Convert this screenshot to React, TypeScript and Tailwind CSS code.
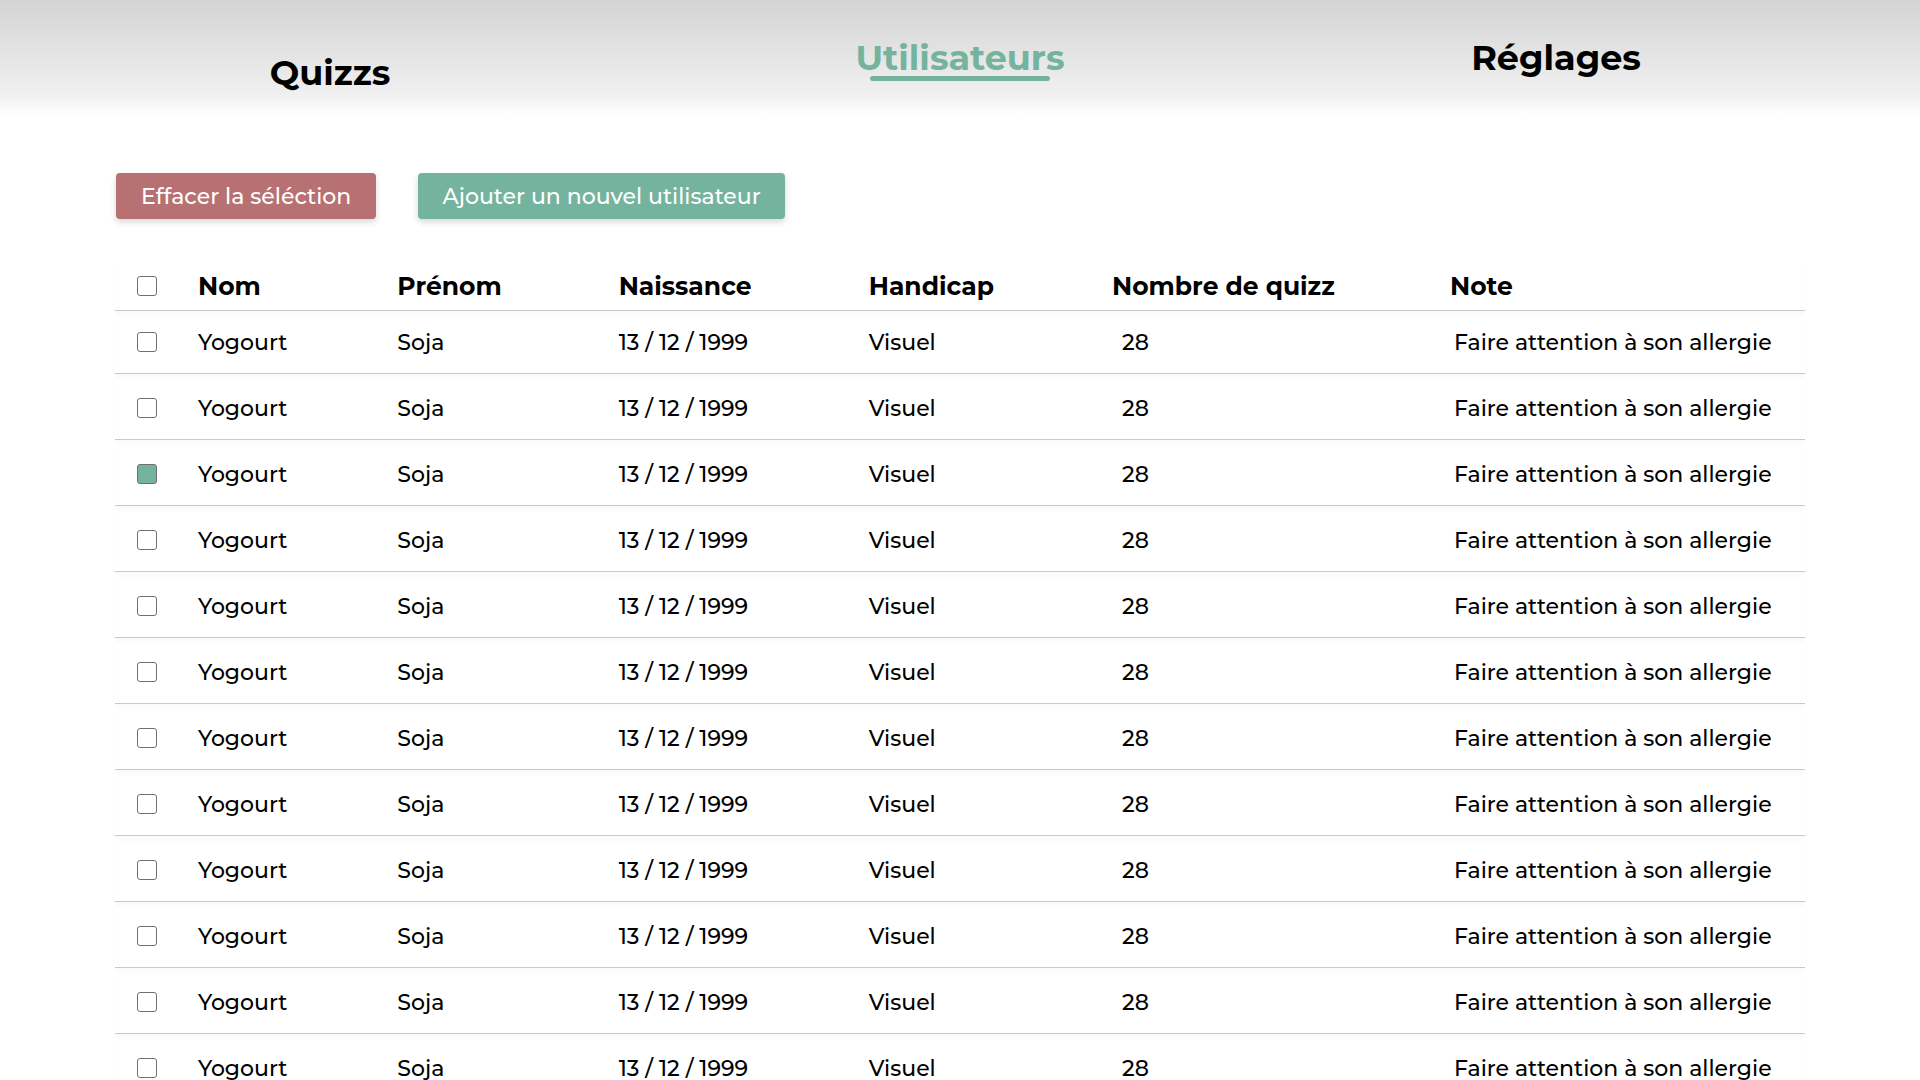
import { useState } from "react";

const COLUMNS = ["Nom", "Prénom", "Naissance", "Handicap", "Nombre de quizz", "Note"];

const USERS = Array.from({ length: 12 }, (_, id) => ({
  id,
  nom: "Yogourt",
  prenom: "Soja",
  naissance: "13 / 12 / 1999",
  handicap: "Visuel",
  quizz: 28,
  note: "Faire attention à son allergie",
}));

function Checkbox({ label, checked, onChange }: { label: string; checked: boolean; onChange: () => void }) {
  return (
    <input
      type="checkbox"
      aria-label={label}
      checked={checked}
      onChange={onChange}
      className="ml-[22px] block size-5 appearance-none rounded-[3px] border border-[#707070] bg-white checked:bg-[#74b49e]"
    />
  );
}

function Header() {
  return (
    <header className="h-[115px] bg-linear-to-b from-[#d4d4d4] via-[#f1f1f1] via-85% to-white pr-[68px]">
      <nav className="grid grid-cols-[660fr_600fr_592fr] justify-items-center pt-9 text-[35px] leading-11 font-bold">
        <a href="#quizzs" className="pt-[15px]">Quizzs</a>
        <a href="#utilisateurs" aria-current="page" className="flex flex-col items-center text-[#74b49e]">
          Utilisateurs
          <span className="-mt-1 h-[5px] w-[180px] rounded-full bg-[#74b49e]" />
        </a>
        <a href="#reglages">Réglages</a>
      </nav>
    </header>
  );
}

export default function App() {
  const [selected, setSelected] = useState<number[]>([2]);
  const toggle = (id: number) =>
    setSelected((s) => (s.includes(id) ? s.filter((x) => x !== id) : [...s, id]));
  const all = selected.length === USERS.length;

  return (
    <div className="bg-white font-['Montserrat','Inter',sans-serif] text-black">
      <Header />
      <main className="px-[6%] pt-[58px]">
        <div className="flex gap-[42px] pl-px text-[22px] font-medium text-white">
          <button type="button" className="h-[46px] w-[260px] rounded bg-[#b77172] whitespace-nowrap shadow-[0_3px_6px_rgba(0,0,0,0.16)]">
            Effacer la séléction
          </button>
          <button type="button" className="h-[46px] w-[367px] rounded bg-[#74b49e] whitespace-nowrap shadow-[0_3px_6px_rgba(0,0,0,0.16)]">
            Ajouter un nouvel utilisateur
          </button>
        </div>
        <table className="mt-[43px] w-full table-fixed border-separate border-spacing-0 text-left">
          <colgroup>
            <col className="w-[4.9%]" />
            <col className="w-[11.8%]" />
            <col className="w-[13.1%]" />
            <col className="w-[14.8%]" />
            <col className="w-[14.4%]" />
            <col className="w-[20%]" />
            <col className="w-[21%]" />
          </colgroup>
          <thead>
            <tr className="h-[49px] shadow-[0_5px_5px_rgba(0,0,0,0.02)]">
              <th className="border-b border-[#c8c8c8] p-0">
                <Checkbox
                  label="Tout sélectionner"
                  checked={all}
                  onChange={() => setSelected(all ? [] : USERS.map((u) => u.id))}
                />
              </th>
              {COLUMNS.map((c) => (
                <th key={c} scope="col" className="border-b border-[#c8c8c8] p-0 text-[25px] leading-8 font-bold whitespace-nowrap">
                  {c}
                </th>
              ))}
            </tr>
          </thead>
          <tbody className="text-[22px] leading-[30px] font-medium whitespace-nowrap [&_td]:border-b [&_td]:border-[#c8c8c8] [&_td]:px-0 [&_td]:pb-0">
            {USERS.map((u) => (
              <tr
                key={u.id}
                className="h-[66px] shadow-[0_5px_5px_rgba(0,0,0,0.02)] first:h-[63px] [&>td]:pt-1 [&>td:first-child]:pt-0.5 first:[&>td]:pt-0.5 first:[&>td:first-child]:pt-0"
              >
                <td>
                  <Checkbox
                    label={`Sélectionner ${u.prenom} ${u.nom}`}
                    checked={selected.includes(u.id)}
                    onChange={() => toggle(u.id)}
                  />
                </td>
                <td>{u.nom}</td>
                <td>{u.prenom}</td>
                <td>{u.naissance}</td>
                <td>{u.handicap}</td>
                <td>
                  <span className="pl-2.5">{u.quizz}</span>
                </td>
                <td>
                  <span className="pl-1">{u.note}</span>
                </td>
              </tr>
            ))}
          </tbody>
        </table>
      </main>
    </div>
  );
}
